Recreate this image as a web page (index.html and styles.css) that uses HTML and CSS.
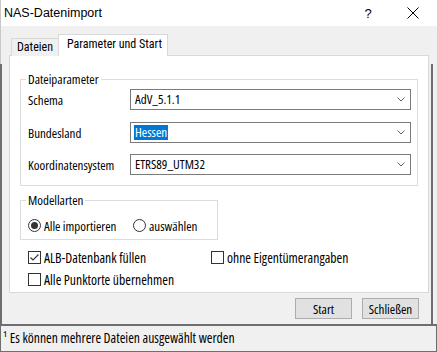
FILE: index.html
```html
<!DOCTYPE html>
<html lang="de">
<head>
<meta charset="utf-8">
<title>NAS-Datenimport</title>
<link rel="stylesheet" href="styles.css">
</head>
<body>
<div class="window">
  <div class="titlebar">
    <span class="title">NAS-Datenimport</span>
    <span class="help">?</span>
    <span class="close"><svg width="12" height="12" viewBox="0 0 12 12"><path d="M0.5 0.5 L11.5 11.5 M11.5 0.5 L0.5 11.5" stroke="#000" stroke-width="1" fill="none"/></svg></span>
  </div>
  <div class="frame">
    <div class="tabs">
      <div class="tab">Dateien</div>
      <div class="tab active">Parameter und Start</div>
    </div>
    <div class="panel">
      <fieldset class="group params">
        <legend>Dateiparameter</legend>
        <div class="row">
          <span class="label">Schema</span>
          <div class="combo"><span class="value">AdV_5.1.1</span><svg class="chev" width="8" height="5" viewBox="0 0 8 5"><path d="M0.5 0.5 L4 4 L7.5 0.5" stroke="#606060" fill="none"/></svg></div>
        </div>
        <div class="row mid">
          <span class="label">Bundesland</span>
          <div class="combo"><span class="value selected">Hessen</span><svg class="chev" width="8" height="5" viewBox="0 0 8 5"><path d="M0.5 0.5 L4 4 L7.5 0.5" stroke="#606060" fill="none"/></svg></div>
        </div>
        <div class="row">
          <span class="label">Koordinatensystem</span>
          <div class="combo"><span class="value">ETRS89_UTM32</span><svg class="chev" width="8" height="5" viewBox="0 0 8 5"><path d="M0.5 0.5 L4 4 L7.5 0.5" stroke="#606060" fill="none"/></svg></div>
        </div>
      </fieldset>
      <fieldset class="group modell">
        <legend>Modellarten</legend>
        <div class="radios">
          <div class="option first"><span class="radio on"></span><span>Alle importieren</span></div>
          <div class="option"><span class="radio"></span><span>auswählen</span></div>
        </div>
      </fieldset>
      <div class="checks">
        <div class="option"><span class="box"><svg width="11" height="11" viewBox="0 0 11 11"><path d="M1.5 5.5 L4 8 L9.5 2.5" stroke="#333" stroke-width="1.1" fill="none"/></svg></span><span>ALB-Datenbank füllen</span></div>
        <div class="option"><span class="box"></span><span>ohne Eigentümerangaben</span></div>
        <div class="option"><span class="box"></span><span>Alle Punktorte übernehmen</span></div>
      </div>
    </div>
    <div class="buttons">
      <button class="btn">Start</button>
      <button class="btn">Schließen</button>
    </div>
  </div>
  <div class="status">¹ Es können mehrere Dateien ausgewählt werden</div>
</div>
</body>
</html>
```
FILE: styles.css
```css
html, body {
  margin: 0;
  padding: 0;
}
body {
  width: 437px;
  height: 352px;
  overflow: hidden;
  background: #f0f0f0;
  font-family: "Open Sans", sans-serif;
  font-stretch: 75%;
  font-size: 13px;
  color: #000;
}
.window {
  width: 437px;
  height: 352px;
}
.titlebar {
  height: 26px;
  box-sizing: border-box;
  background: #fff;
  border-left: 1px solid #c8c8c8;
  display: flex;
  align-items: center;
  font-family: "Liberation Sans", Arial, sans-serif;
  font-stretch: normal;
  font-size: 12.5px;
}
.title {
  flex: 1;
  padding-left: 3px;
}
.help {
  width: 12px;
  text-align: center;
  font-size: 13px;
  margin-right: 33px;
}
.close {
  width: 12px;
  height: 12px;
  margin-right: 18px;
  display: flex;
}
.frame {
  width: 433px;
  height: 298px;
  box-sizing: border-box;
  padding: 8px 2px 0 9px;
  background:
    linear-gradient(#6e6e6e, #6e6e6e) left 0 top 38px / 2px calc(100% - 38px) no-repeat,
    linear-gradient(#6e6e6e, #6e6e6e) right 0 top 38px / 2px calc(100% - 38px) no-repeat,
    linear-gradient(#c8c8c8, #c8c8c8) left 0 top 0 / 1px 38px no-repeat;
}
.tabs {
  display: flex;
  align-items: flex-end;
  height: 22px;
  margin-bottom: -1px;
  padding-left: 2px;
}
.tab {
  height: 18px;
  box-sizing: border-box;
  border: 1px solid #d9d9d9;
  border-bottom: none;
  background: #f0f0f0;
  font-family: Roboto, sans-serif;
  font-stretch: 75%;
  font-size: 12px;
  line-height: 17px;
  padding: 0 4px 0 5px;
  width: 48px;
  white-space: nowrap;
}
.tab.active {
  height: 22px;
  width: 110px;
  margin-left: -1px;
  background: #fff;
  position: relative;
  z-index: 1;
  line-height: 19px;
  padding-left: 8px;
}
.panel {
  width: 420px;
  height: 238px;
  box-sizing: border-box;
  border: 1px solid #d9d9d9;
  background: #fff;
  padding: 16px 0 0 10px;
}
.group {
  margin: 0;
  box-sizing: border-box;
  border: 1px solid #dcdcdc;
  min-width: 0;
}
.group legend {
  padding: 0 2px;
  margin-left: -2px;
  line-height: 15px;
}
.params {
  width: 398px;
  padding: 2px 6px 10px 7px;
  display: flex;
  flex-direction: column;
  gap: 11px;
}
.row {
  display: flex;
  align-items: center;
  height: 21px;
}
.row.mid {
  margin-top: 1px;
}
.label {
  width: 102px;
  white-space: nowrap;
}
.combo {
  width: 281px;
  height: 21px;
  box-sizing: border-box;
  border: 1px solid #7a7a7a;
  display: flex;
  align-items: center;
  justify-content: space-between;
  padding: 0 5px 0 3px;
  background: #fff;
}
.value {
  line-height: 15px;
  padding: 0 1px;
}
.value.selected {
  background: #0078d7;
  color: #fff;
}
.modell {
  width: 198px;
  margin-top: 7px;
  padding: 10px 0 6px 7px;
}
.radios {
  display: flex;
  height: 15px;
  align-items: center;
  white-space: nowrap;
}
.option {
  display: flex;
  align-items: center;
  gap: 3px;
  height: 15px;
  white-space: nowrap;
}
.option.first {
  width: 105px;
}
.radio {
  width: 13px;
  height: 13px;
  box-sizing: border-box;
  border: 1px solid #333;
  border-radius: 50%;
  display: flex;
  align-items: center;
  justify-content: center;
  background: #fff;
}
.radio.on::after {
  content: "";
  width: 7px;
  height: 7px;
  border-radius: 50%;
  background: #333;
}
.checks {
  margin-top: 10px;
  padding-left: 8px;
  display: grid;
  grid-template-columns: 183px auto;
  row-gap: 7px;
  font-size: 13.7px;
}
.box {
  width: 13px;
  height: 13px;
  box-sizing: border-box;
  border: 1px solid #333;
  background: #fff;
  display: flex;
}
.buttons {
  display: flex;
  justify-content: flex-end;
  gap: 10px;
  margin-top: 5px;
  padding-right: 12px;
}
.btn {
  width: 57px;
  height: 21px;
  margin: 0;
  padding: 0;
  background: #e1e1e1;
  border: 1px solid #adadad;
  font-family: inherit;
  font-stretch: inherit;
  font-size: 13px;
  color: #000;
}
.status {
  height: 28px;
  box-sizing: border-box;
  border-top: 2px solid #6e6e6e;
  border-left: 1px solid #6e6e6e;
  border-right: 1px solid #6e6e6e;
  border-bottom: 1px solid #6e6e6e;
  padding-left: 2px;
  line-height: 24px;
  font-size: 13.7px;
}
```
